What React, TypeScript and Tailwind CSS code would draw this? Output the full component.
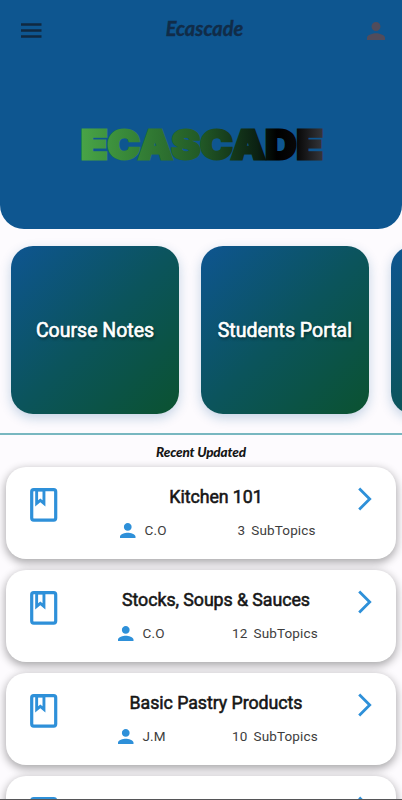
import React from 'react';

const roboto = "font-['Roboto','Liberation_Sans',sans-serif]";
const script = "font-['Lato','Open_Sans',sans-serif]";

function PersonIcon({ className }: { className: string }) {
  return (
    <svg viewBox="4 4 16 16" className={className} fill="currentColor">
      <path d="M12 12c2.21 0 4-1.79 4-4s-1.79-4-4-4-4 1.79-4 4 1.79 4 4 4zm0 2c-2.67 0-8 1.34-8 4v2h16v-2c0-2.66-5.33-4-8-4z" />
    </svg>
  );
}

function BookIcon() {
  return (
    <svg viewBox="0 0 28 34" className="h-[34px] w-[28px] shrink-0 text-[#2e90d9]" fill="none" stroke="currentColor">
      <rect x="1.7" y="1.7" width="24" height="30.4" rx="2" strokeWidth="3.2" />
      <path d="M5.2 2h10.2v16.5l-5.1-4.2-5.1 4.2zM8.1 3.5v8.8l2.2-1.8 2.2 1.8V3.5z" fill="currentColor" fillRule="evenodd" stroke="none" />
    </svg>
  );
}

function ChevronIcon() {
  return (
    <svg viewBox="0 0 14 24" className="mt-[2px] h-[24px] w-[14px] shrink-0 text-[#2e90d9]" fill="none" stroke="currentColor" strokeWidth="2.8">
      <path d="M1.2 1.5 11.7 12 1.2 22.5" />
    </svg>
  );
}

function Tile({ label }: { label: string }) {
  return (
    <div className="flex size-[167.5px] shrink-0 items-center justify-center rounded-[22px] bg-[linear-gradient(135deg,#0e5591_0%,#0b545c_50%,#0b5230_100%)] shadow-[0_4px_12px_rgba(14,85,145,0.24)]">
      <span className="pt-[2px] text-[19.5px] leading-6 font-normal whitespace-nowrap text-white [-webkit-text-stroke:0.6px_white] [text-shadow:1px_2px_3px_rgba(0,0,0,0.5)]">{label}</span>
    </div>
  );
}

interface Course {
  title: string;
  author: string;
  count: string;
  metaClass: string;
  gapClass: string;
}

const courses: Course[] = [
  { title: 'Kitchen 101', author: 'C.O', count: '3', metaClass: 'ml-[114px]', gapClass: 'w-[93px]' },
  { title: 'Stocks, Soups & Sauces', author: 'C.O', count: '12', metaClass: 'ml-[112px]', gapClass: 'w-[89.5px]' },
  { title: 'Basic Pastry Products', author: 'J.M', count: '10', metaClass: 'ml-[112px]', gapClass: 'w-[89.5px]' },
];

const cardClass = 'h-[91.5px] shrink-0 rounded-[20px] bg-white pt-[18px] shadow-[0_3px_9px_1px_rgba(0,0,0,0.32)]';

function CourseCard({ course }: { course: Course }) {
  return (
    <div className={cardClass}>
      <div className="flex h-[36px] items-start px-[24px]">
        <div className="pt-[3px]"><BookIcon /></div>
        <div className="flex h-6 flex-1 justify-center pl-[16px] text-[17.8px] leading-6 font-normal tracking-[-0.06px] whitespace-nowrap text-[#161616] [-webkit-text-stroke:0.55px_#161616]">{course.title}</div>
        <ChevronIcon />
      </div>
      <div className={`flex h-[18px] items-center text-[13.5px] tracking-[0.15px] text-[#3d3d3d] ${course.metaClass}`}>
        <PersonIcon className="size-[15.5px] shrink-0 text-[#2e90d9]" />
        <span className={`ml-[9px] shrink-0 ${course.gapClass}`}>{course.author}</span>
        <span className="whitespace-nowrap">{course.count}</span>
        <span className="ml-[6px] whitespace-nowrap">SubTopics</span>
      </div>
    </div>
  );
}

export default function App() {
  return (
    <div className={`relative flex h-[800px] w-[402px] flex-col overflow-hidden bg-[#fdfbfe] ${roboto}`}>
      <header className="h-[229.3px] shrink-0 rounded-b-[24px] bg-[#0e5690]">
        <div className="flex h-[60px] items-center justify-between pr-[17px] pl-[21px]">
          <svg viewBox="0 0 21 15" className="mt-px h-[15px] w-[21px] text-[#102940]" stroke="currentColor" strokeWidth="2.4">
            <path d="M0 1.5h20.5M0 7.5h20.5M0 13.5h20.5" />
          </svg>
          <h1 className={`-mt-1 text-[20px] leading-6 font-bold tracking-[0.02px] text-[#112c48] italic [-webkit-text-stroke:0.4px_#112c48] ${script}`}>Ecascade</h1>
          <PersonIcon className="mt-px size-[18px] text-[#514c5b]" />
        </div>
        <svg viewBox="0 0 250 40" className="mt-[64px] ml-[77px] h-[40px] w-[250px]">
          <defs>
            <linearGradient id="logo" x1="0" x2="250" y1="0" y2="0" gradientUnits="userSpaceOnUse">
              <stop offset="0" stopColor="#4aa648" />
              <stop offset="0.2" stopColor="#388839" />
              <stop offset="0.48" stopColor="#235c27" />
              <stop offset="0.72" stopColor="#0b2112" />
              <stop offset="0.8" stopColor="#000000" />
              <stop offset="0.88" stopColor="#080808" />
              <stop offset="1" stopColor="#3c3d42" />
            </linearGradient>
          </defs>
          <text x="4" y="34.5" textLength="242" lengthAdjust="spacingAndGlyphs" fontFamily="Inter, sans-serif" fontSize="39.5" fontWeight="900" fill="url(#logo)" stroke="url(#logo)" strokeWidth="2.8">ECASCADE</text>
        </svg>
      </header>
      <section className="flex h-[203.7px] shrink-0 gap-[22.3px] overflow-hidden pt-[16.9px] pl-[11.3px]">
        <Tile label="Course Notes" />
        <Tile label="Students Portal" />
        <Tile label="" />
      </section>
      <div className="h-[2px] shrink-0 bg-[#78b7c0]" />
      <h2 className={`flex h-[32.5px] shrink-0 items-center justify-center pt-[2px] text-[13.5px] leading-5 font-black tracking-[-0.15px] text-[#151515] italic ${script}`}>Recent Updated</h2>
      <main className="flex flex-col gap-[11.4px] px-[6px]">
        {courses.map((course) => (
          <CourseCard key={course.title} course={course} />
        ))}
        <div className={cardClass}>
          <div className="flex items-start justify-between px-[24px]">
            <div className="pt-[3px]"><BookIcon /></div>
            <ChevronIcon />
          </div>
        </div>
      </main>
      <div className="absolute inset-x-0 bottom-0 h-px bg-[#555557]" />
    </div>
  );
}
